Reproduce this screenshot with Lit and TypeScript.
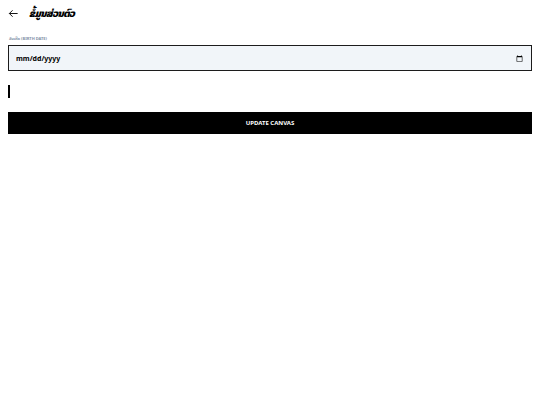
import { LitElement, html, css } from "lit";
import { customElement } from "lit/decorators.js";

@customElement("app-root")
export class AppRoot extends LitElement {
  static styles = css`
    :host {
      display: block;
      min-height: 100vh;
      background: #fff;
      color: #000;
      font-family: "Noto Sans", "Noto Sans Lao", "DejaVu Sans", sans-serif;
    }
    * {
      box-sizing: border-box;
    }
    .header {
      display: flex;
      align-items: center;
      gap: 10px;
      height: 26px;
      padding: 0 8px;
    }
    .back {
      display: flex;
      padding: 0;
      border: 0;
      background: none;
      color: inherit;
    }
    .title {
      margin: 0;
      font-size: 10px;
      line-height: 14px;
      font-weight: 900;
      font-style: italic;
      letter-spacing: -0.05em;
    }
    .form {
      display: flex;
      flex-direction: column;
      padding: 10px 8px;
    }
    .label {
      font-size: 4px;
      line-height: 6px;
      font-weight: 700;
      color: #8391a8;
      margin-bottom: 3px;
      padding-left: 1px;
    }
    .date {
      width: 100%;
      height: 26px;
      margin: 0;
      padding: 0 8px 0 7px;
      border: 1px solid #1c1c1c;
      border-radius: 0;
      background: #f1f5f9;
      color: #000;
      font: inherit;
      font-size: 7px;
      font-weight: 700;
      outline: none;
    }
    .date::-webkit-datetime-edit,
    .date::-webkit-datetime-edit-month-field,
    .date::-webkit-datetime-edit-day-field,
    .date::-webkit-datetime-edit-year-field {
      padding: 0;
    }
    .date::-webkit-calendar-picker-indicator {
      width: 7px;
      height: 7px;
      padding: 0;
    }
    .note {
      height: 13px;
      margin: 14px 0;
      border-left: 2px solid #000;
    }
    .submit {
      width: 100%;
      height: 22px;
      padding: 0;
      border: 0;
      background: #000;
      color: #fff;
      font: inherit;
      font-size: 6px;
      font-weight: 700;
    }
  `;

  render() {
    return html`
      <header class="header">
        <button class="back" type="button" aria-label="Back">
          <svg width="11" height="11" viewBox="0 0 24 24" fill="none" stroke="currentColor" stroke-width="2">
            <path d="M21 12H3M10 19l-7-7 7-7" />
          </svg>
        </button>
        <h1 class="title">ຂໍ້ມູນສ່ວນຕົວ</h1>
      </header>
      <form class="form">
        <label class="label" for="birth">ວັນເກີດ (BIRTH DATE)</label>
        <input class="date" id="birth" type="date" />
        <div class="note"></div>
        <button class="submit" type="button">UPDATE CANVAS</button>
      </form>
    `;
  }
}
